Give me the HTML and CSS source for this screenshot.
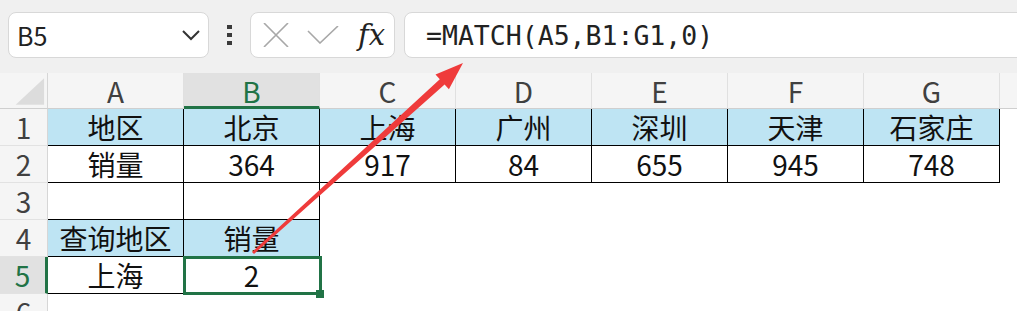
FILE: index.html
```html
<!DOCTYPE html>
<html lang="zh">
<head>
    <meta charset="UTF-8">
    <title>MATCH</title>
    <link rel="stylesheet" href="styles.css">
</head>
<body>
    <div class="toolbar">
        <div class="namebox">
            <span>B5</span>
            <svg width="18" height="12" viewBox="0 0 18 12"><path d="M1 2 L9 10 L17 2" fill="none" stroke="#333" stroke-width="2"/></svg>
        </div>
        <div class="dots"><i></i><i></i><i></i></div>
        <div class="fxbox">
            <svg width="26" height="24" viewBox="0 0 26 24"><path d="M1 0 L25 24 M25 0 L1 24" stroke="#a8a8a8" stroke-width="1.6"/></svg>
            <svg width="32" height="18" viewBox="0 0 32 18"><path d="M1 5 L13 17 L31 0" fill="none" stroke="#a8a8a8" stroke-width="1.6"/></svg>
            <span class="fx">fx</span>
        </div>
        <div class="formula">=MATCH(A5,B1:G1,0)</div>
    </div>

    <div class="sheet">
        <div class="corner"><svg width="48" height="36" viewBox="0 0 48 36"><path d="M16 32 L45 5 L45 32 Z" fill="#dcdcdc"/></svg></div>
        <div class="ch">A</div>
        <div class="ch sel">B</div>
        <div class="ch">C</div>
        <div class="ch">D</div>
        <div class="ch">E</div>
        <div class="ch">F</div>
        <div class="ch">G</div>
        <div class="ch last"></div>

        <div class="rh">1</div>
        <div class="c bd blue">地区</div>
        <div class="c bd blue">北京</div>
        <div class="c bd blue">上海</div>
        <div class="c bd blue">广州</div>
        <div class="c bd blue">深圳</div>
        <div class="c bd blue">天津</div>
        <div class="c bd blue">石家庄</div>
        <div class="c"></div>

        <div class="rh">2</div>
        <div class="c bd">销量</div>
        <div class="c bd">364</div>
        <div class="c bd">917</div>
        <div class="c bd">84</div>
        <div class="c bd">655</div>
        <div class="c bd">945</div>
        <div class="c bd">748</div>
        <div class="c"></div>

        <div class="rh">3</div>
        <div class="c bd"></div>
        <div class="c bd"></div>
        <div class="c"></div><div class="c"></div><div class="c"></div><div class="c"></div><div class="c"></div><div class="c"></div>

        <div class="rh">4</div>
        <div class="c bd blue">查询地区</div>
        <div class="c bd blue">销量</div>
        <div class="c"></div><div class="c"></div><div class="c"></div><div class="c"></div><div class="c"></div><div class="c"></div>

        <div class="rh sel">5</div>
        <div class="c bd">上海</div>
        <div class="c bd active">2<span class="handle"></span></div>
        <div class="c"></div><div class="c"></div><div class="c"></div><div class="c"></div><div class="c"></div><div class="c"></div>

        <div class="rh">6</div>
        <div class="c"></div><div class="c"></div><div class="c"></div><div class="c"></div><div class="c"></div><div class="c"></div><div class="c"></div><div class="c"></div>
    </div>

    <!-- callout arrow from the result cell to the formula bar -->
    <svg class="arrow" width="1017" height="311" viewBox="0 0 1017 311">
        <polygon points="252,252 439.8,79.2 435.5,74.4 463,63 448.9,89.2 444.6,84.4 254,254" fill="#ef3b3b"/>
    </svg>
</body>
</html>
```

FILE: styles.css
```css
body {
    margin: 0;
    background: #ffffff;
    font-family: "Noto Sans CJK SC", "Noto Sans", sans-serif;
    overflow: hidden;
    position: relative;
}
.toolbar {
    display: flex;
    align-items: flex-start;
    height: 73px;
    box-sizing: border-box;
    padding: 12px 0 0 8px;
    background: #f0f0f0;
    overflow: hidden;
}
.namebox, .fxbox, .formula {
    height: 46px;
    box-sizing: border-box;
    border: 1px solid #d8d8d8;
    border-radius: 8px;
    background: #fff;
    display: flex;
    align-items: center;
}
.namebox {
    width: 201px;
    justify-content: space-between;
    padding: 0 8px 0 8px;
    font-size: 25px;
    color: #222;
}
.dots {
    width: 41px;
    height: 46px;
    display: flex;
    flex-direction: column;
    align-items: center;
    justify-content: center;
    gap: 4px;
}
.dots i { display: block; width: 5px; height: 4px; background: #3a3a3a; }
.fxbox {
    width: 145px;
    padding: 0 0 0 12px;
    gap: 18px;
}
.fx {
    font-family: "DejaVu Serif", "Liberation Serif", serif;
    font-style: italic;
    font-size: 29px;
    color: #222;
    margin-left: 1px;
}
.formula {
    flex: 1;
    margin-left: 9px;
    margin-right: -20px;
    padding-left: 21px;
    font-family: "DejaVu Sans Mono", "Liberation Mono", monospace;
    font-size: 26.5px;
    color: #222;
}

.sheet {
    display: grid;
    grid-template-columns: 48px repeat(7, 136px) 1fr;
    grid-template-rows: 36px;
    grid-auto-rows: 37px;
}
.sheet > div {
    box-sizing: border-box;
    display: flex;
    align-items: center;
    justify-content: center;
    font-size: 28px;
    line-height: 1;
}
.corner {
    background: #f5f5f5;
    border-right: 1px solid #d6d6d6;
    border-bottom: 1px solid #cfcfcf;
}
.ch {
    background: #f5f5f5;
    border-right: 1px solid #e0e0e0;
    border-bottom: 1px solid #cfcfcf;
    color: #404040;
}
.ch.last { border-right: none; }
.ch.sel {
    background: #e1e1e1;
    border-bottom: 3px solid #217346;
    color: #217346;
    padding-top: 2px;
}
.rh {
    background: #f5f5f5;
    border-right: 1px solid #d6d6d6;
    border-bottom: 1px solid #e2e2e2;
    color: #404040;
}
.rh.sel {
    background: #e1e1e1;
    border-right: 3px solid #217346;
    color: #217346;
}
.c { color: #111; background: #fff; }
.bd {
    border-right: 1px solid #000;
    border-bottom: 1px solid #000;
}
.blue { background: #bee4f3; }
.active { position: relative; }
.active::after {
    content: "";
    position: absolute;
    left: -1px;
    top: -1px;
    right: -3px;
    bottom: -2px;
    border: 3px solid #217346;
}
.handle {
    position: absolute;
    left: 132px;
    top: 33px;
    width: 8px;
    height: 8px;
    background: #217346;
    z-index: 1;
}
.arrow {
    position: absolute;
    left: 0;
    top: 0;
    pointer-events: none;
}
```
